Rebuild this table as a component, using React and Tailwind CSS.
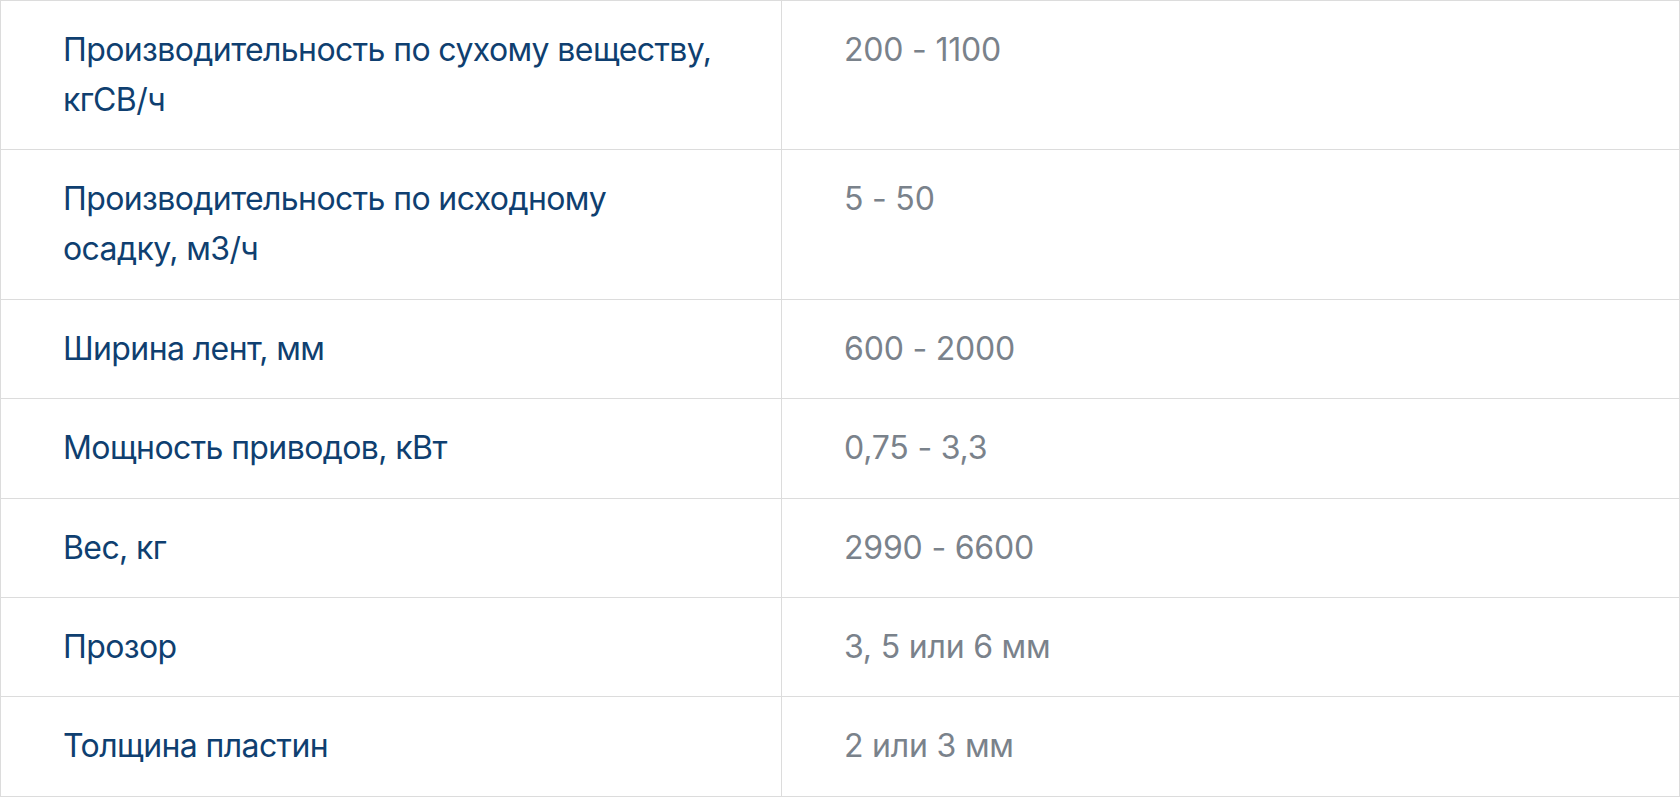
import React from 'react';

const ROWS = [
  { label: 'Производительность по сухому веществу, кгСВ/ч', value: '200 - 1100' },
  { label: 'Производительность по исходному осадку, м3/ч', value: '5 - 50' },
  { label: 'Ширина лент, мм', value: '600 - 2000' },
  { label: 'Мощность приводов, кВт', value: '0,75 - 3,3' },
  { label: 'Вес, кг', value: '2990 - 6600' },
  { label: 'Прозор', value: '3, 5 или 6 мм' },
  { label: 'Толщина пластин', value: '2 или 3 мм' },
];

export default function App() {
  return (
    <div
      className="w-[1680px] bg-white"
      style={{ fontFamily: 'Inter, "Noto Sans", sans-serif' }}
    >
      <div className="grid grid-cols-[781px_1fr] border-t border-l border-[#dcdcdc]">
        {ROWS.map(row => (
          <React.Fragment key={row.label}>
            <div className="border-r border-b border-[#dcdcdc] pl-[62px] pr-[30px] pt-[24px] pb-[24.4px] text-[32px] leading-[50px] tracking-[-0.6px] text-[#0f3f70]">
              <span className="block max-w-[655px]">{row.label}</span>
            </div>
            <div className="border-r border-b border-[#dcdcdc] pl-[62px] pt-[24px] pb-[24.4px] text-[32px] leading-[50px] tracking-[-0.2px] text-[#7a828b]">
              {row.value}
            </div>
          </React.Fragment>
        ))}
      </div>
    </div>
  );
}
